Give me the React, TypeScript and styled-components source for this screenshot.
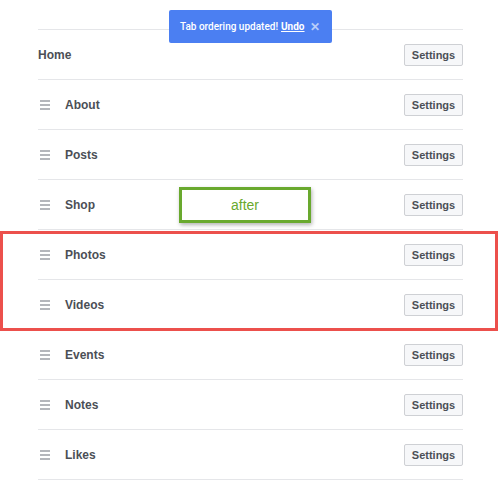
import React from "react";
import styled, { createGlobalStyle } from "styled-components";

const GlobalStyle = createGlobalStyle`
	body {
		margin: 0;
		background: #ffffff;
		font-family: "Liberation Sans", Arial, sans-serif;
	}
`;

const TABS: { name: string; draggable: boolean }[] = [
	{ name: "Home", draggable: false },
	{ name: "About", draggable: true },
	{ name: "Posts", draggable: true },
	{ name: "Shop", draggable: true },
	{ name: "Photos", draggable: true },
	{ name: "Videos", draggable: true },
	{ name: "Events", draggable: true },
	{ name: "Notes", draggable: true },
	{ name: "Likes", draggable: true },
];

const Page = styled.div`
	position: relative;
	width: 500px;
	height: 500px;
	overflow: hidden;
`;

const TabList = styled.ul`
	list-style: none;
	margin: 29px 0 0 38px;
	padding: 0;
	width: 425px;
	border-top: 1px solid #e5e6e9;
`;

const Row = styled.li`
	display: flex;
	align-items: center;
	height: 49px;
	padding-left: 2px;
	border-bottom: 1px solid #e5e6e9;
`;

const Handle = styled.span`
	display: flex;
	flex-direction: column;
	gap: 2px;
	width: 10px;
	margin-right: 15px;

	i {
		display: block;
		height: 2px;
		background: #b4b6bb;
	}
`;

const Label = styled.span<{ $indent: boolean }>`
	margin-left: ${(p) => (p.$indent ? 0 : -2)}px;
	font-size: 12px;
	font-weight: bold;
	color: #4b4f56;
	flex: 1;
`;

const SettingsButton = styled.button`
	width: 59px;
	height: 22px;
	padding: 0;
	background: #f6f7f9;
	border: 1px solid #ced0d4;
	border-radius: 2px;
	font-family: inherit;
	font-size: 11px;
	font-weight: bold;
	color: #4b4f56;
`;

const Toast = styled.div`
	position: absolute;
	top: 10px;
	left: 169px;
	width: 163px;
	height: 33px;
	display: flex;
	align-items: center;
	box-sizing: border-box;
	padding-left: 11px;
	background: #4b7ff2;
	border-radius: 2px;
	color: #ffffff;
	font-family: Roboto, "Liberation Sans", sans-serif;
	font-size: 10px;
	font-weight: 500;
	white-space: nowrap;

	a {
		margin-left: 3px;
		color: #ffffff;
		font-weight: bold;
		text-decoration: underline;
	}
`;

const Close = styled.span`
	margin-left: auto;
	margin-right: 12px;
	color: #b9cdf9;
	font-size: 12px;
	font-weight: bold;
	line-height: 1;
`;

const AfterNote = styled.div`
	position: absolute;
	top: 187px;
	left: 179px;
	width: 132px;
	height: 36px;
	box-sizing: border-box;
	display: flex;
	align-items: center;
	justify-content: center;
	border: 3px solid #69a92e;
	background: #ffffff;
	box-shadow: 1px 2px 4px rgba(0, 0, 0, 0.3);
	color: #69a92e;
	font-size: 14px;
`;

const Highlight = styled.div`
	position: absolute;
	top: 231px;
	left: 0;
	width: 498px;
	height: 100px;
	box-sizing: border-box;
	border: 3px solid #ec504c;
	pointer-events: none;
`;

export default function App() {
	return (
		<Page>
			<GlobalStyle />
			<TabList>
				{TABS.map((tab) => (
					<Row key={tab.name}>
						{tab.draggable && (
							<Handle>
								<i />
								<i />
								<i />
							</Handle>
						)}
						<Label $indent={tab.draggable}>{tab.name}</Label>
						<SettingsButton>Settings</SettingsButton>
					</Row>
				))}
			</TabList>
			<Toast>
				Tab ordering updated! <a>Undo</a>
				<Close>✕</Close>
			</Toast>
			<AfterNote>after</AfterNote>
			<Highlight />
		</Page>
	);
}
